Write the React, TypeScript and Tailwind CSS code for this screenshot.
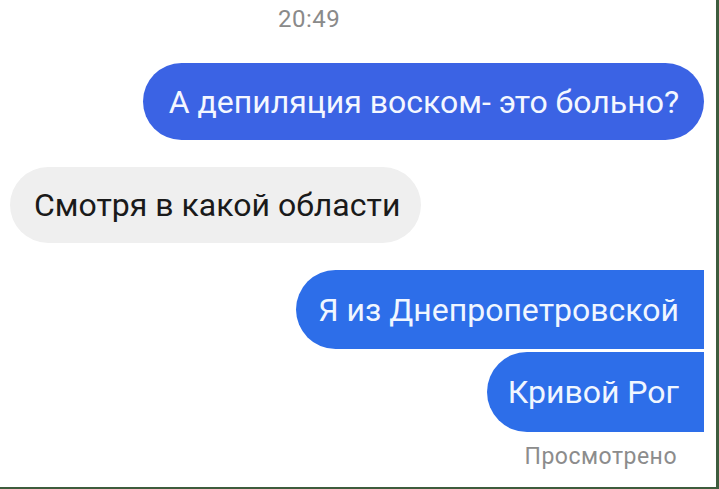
const font = { fontFamily: 'Roboto, "Liberation Sans", sans-serif' }

export default function App() {
  return (
    <div
      className="flex h-[489px] w-[719px] flex-col overflow-hidden border-b-[2px] border-r-[3px] border-[#3d5c3d] bg-white"
      style={font}
    >
      <div className="pl-[278px] pt-[5px] text-[24px] leading-[28px] tracking-[0.5px] text-[#8a8a8a]">20:49</div>

      <div className="mt-[30px] mr-[12px] flex h-[77px] items-center self-end rounded-full bg-[#3b63e4] pl-[26px] pr-[25px] text-[32px] text-[#f4f7ff]">
        А депиляция воском- это больно?
      </div>

      <div className="mt-[27px] ml-[10px] flex h-[76px] items-center self-start rounded-full bg-[#efefef] pl-[24px] pr-[21px] text-[32px] text-[#1a1a1a]">
        Смотря в какой области
      </div>

      <div className="mt-[27px] mr-[12px] flex h-[79px] items-center self-end rounded-l-full rounded-tr-[38px] rounded-br-[10px] bg-[#2d6ee9] pl-[22px] pr-[25px] text-[32px] text-[#f0f6ff]">
        Я из Днепропетровской
      </div>

      <div className="mt-[3px] mr-[12px] flex h-[80px] items-center self-end rounded-l-full rounded-tr-[10px] rounded-br-[38px] bg-[#2d6ee9] pl-[21px] pr-[25px] text-[32px] text-[#f0f6ff]">
        Кривой Рог
      </div>

      <div className="mt-[12px] mr-[39px] self-end text-[23px] leading-[26px] tracking-[0.5px] text-[#8c8c8c]">Просмотрено</div>
    </div>
  )
}
